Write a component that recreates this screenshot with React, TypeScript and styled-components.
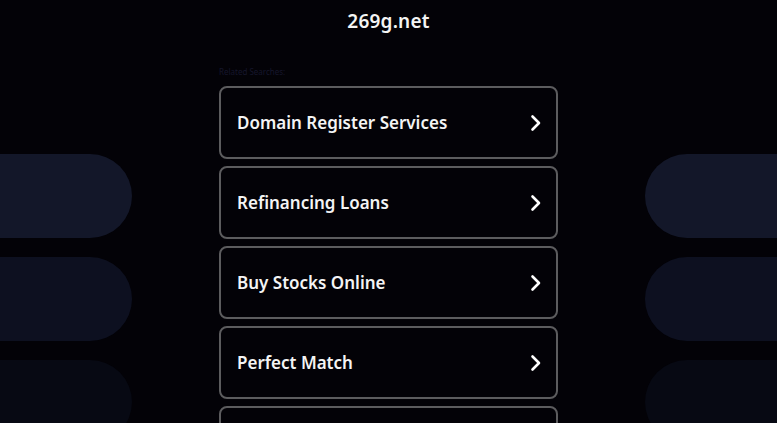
import React from 'react';
import styled, { createGlobalStyle } from 'styled-components';

const GlobalStyle = createGlobalStyle`
  html, body {
    margin: 0;
    padding: 0;
    background: #030207;
  }
  body {
    font-family: 'Noto Sans', 'DejaVu Sans', sans-serif;
    overflow: hidden;
  }
`;

const links = [
  'Domain Register Services',
  'Refinancing Loans',
  'Buy Stocks Online',
  'Perfect Match',
  'Web Hosting',
];

const pillColors = ['#131729', '#0d1020', '#070913'];

export default function App() {
  return (
    <>
      <GlobalStyle />
      <Page>
        <Side $side="left">
          {pillColors.map(c => (
            <Pill key={c} $color={c} $side="left" />
          ))}
        </Side>
        <Center>
          <Title>269g.net</Title>
          <Related>Related Searches:</Related>
          <List>
            {links.map(label => (
              <Card key={label} href="#">
                <span>{label}</span>
                <Chevron />
              </Card>
            ))}
          </List>
        </Center>
        <Side $side="right">
          {pillColors.map(c => (
            <Pill key={c} $color={c} $side="right" />
          ))}
        </Side>
      </Page>
    </>
  );
}

function Chevron() {
  return (
    <svg width="14" height="18" viewBox="0 0 14 18" fill="none">
      <path
        d="M4.5 2.5 L11 9 L4.5 15.5"
        stroke="#fff"
        strokeWidth="2.6"
        strokeLinecap="round"
        strokeLinejoin="round"
      />
    </svg>
  );
}

const Page = styled.div`
  display: grid;
  grid-template-columns: 1fr 339px 1fr;
  column-gap: 87px;
  height: 423px;
  overflow: hidden;
  background: #030207;
`;

const Side = styled.div<{ $side: 'left' | 'right' }>`
  display: flex;
  flex-direction: column;
  align-items: ${p => (p.$side === 'left' ? 'flex-end' : 'flex-start')};
  gap: 19px;
  padding-top: 154px;
  margin: ${p => (p.$side === 'left' ? '0 0 0 -100px' : '0 -100px 0 0')};
`;

const Pill = styled.div<{ $color: string; $side: 'left' | 'right' }>`
  width: 232px;
  height: 84px;
  flex: none;
  background: ${p => p.$color};
  border-radius: ${p =>
    p.$side === 'left' ? '0 42px 42px 0' : '42px 0 0 42px'};
`;

const Center = styled.div`
  display: flex;
  flex-direction: column;
`;

const Title = styled.h1`
  margin: 9px 0 0;
  text-align: center;
  color: #f4f4f4;
  font-size: 19px;
  font-weight: 600;
  line-height: 24px;
  letter-spacing: 0.2px;
`;

const Related = styled.div`
  margin-top: 34px;
  color: #16162c;
  font-size: 8px;
  line-height: 10px;
`;

const List = styled.div`
  display: flex;
  flex-direction: column;
  gap: 7px;
  margin-top: 9px;
`;

const Card = styled.a`
  display: flex;
  align-items: center;
  justify-content: space-between;
  box-sizing: border-box;
  height: 73px;
  padding: 0 14px 0 16px;
  border: 2px solid #5c5c5e;
  border-radius: 8px;
  color: #f4f4f4;
  text-decoration: none;
  font-size: 17px;
  font-weight: 600;
  letter-spacing: 0;
`;
